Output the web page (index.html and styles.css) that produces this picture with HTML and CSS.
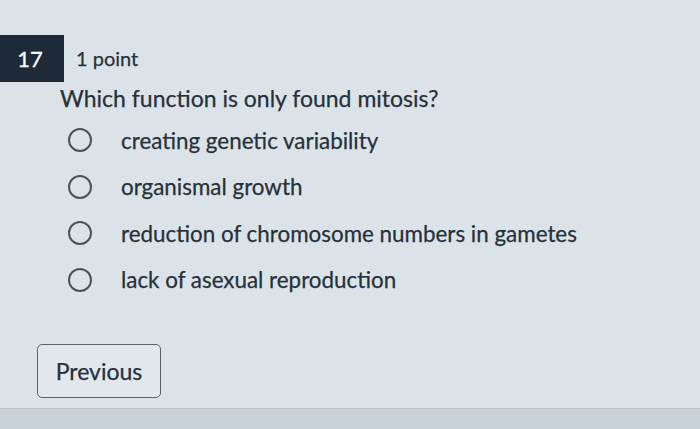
FILE: index.html
```html
<!DOCTYPE html>
<html>
<head>
<meta charset="utf-8">
<link rel="stylesheet" href="styles.css">
</head>
<body>
<div class="page">
  <div class="header">
    <div class="badge">17</div>
    <div class="points">1 point</div>
  </div>
  <div class="question">Which function is only found mitosis?</div>
  <ul class="options">
    <li class="option"><span class="radio"></span><span class="label">creating genetic variability</span></li>
    <li class="option"><span class="radio"></span><span class="label">organismal growth</span></li>
    <li class="option"><span class="radio"></span><span class="label">reduction of chromosome numbers in gametes</span></li>
    <li class="option"><span class="radio"></span><span class="label">lack of asexual reproduction</span></li>
  </ul>
  <div class="nav">
    <button class="btn">Previous</button>
  </div>
</div>
<div class="footer"></div>
</body>
</html>
```
FILE: styles.css
```css
html, body {
  margin: 0;
  padding: 0;
}
body {
  width: 700px;
  height: 429px;
  overflow: hidden;
  background: #dce3e8;
  font-family: Lato, "Open Sans", sans-serif;
  color: #26313a;
  -webkit-text-stroke: 0.25px #26313a;
  display: flex;
  flex-direction: column;
}
.page {
  flex: 1;
  padding-top: 35px;
}
.header {
  display: flex;
  align-items: center;
}
.badge {
  width: 64px;
  height: 47px;
  background: #1e2a37;
  color: #fff;
  -webkit-text-stroke: 0.3px #fff;
  font-size: 22px;
  display: flex;
  align-items: center;
  justify-content: center;
  padding-right: 4px;
  box-sizing: border-box;
}
.points {
  margin-left: 12px;
  font-size: 20px;
  padding-bottom: 2px;
}
.question {
  margin-left: 60px;
  margin-top: 2px;
  font-size: 23px;
}
.options {
  list-style: none;
  margin: 15px 0 0 68px;
  padding: 0;
  display: flex;
  flex-direction: column;
  gap: 20px;
}
.option {
  display: flex;
  align-items: center;
  height: 26.5px;
}
.radio {
  width: 24px;
  height: 24px;
  border: 2px solid #4a535b;
  border-radius: 50%;
  box-sizing: border-box;
  margin-right: 29px;
  flex: none;
}
.label {
  font-size: 22.4px;
}
.nav {
  margin: 51px 0 0 37px;
}
.btn {
  width: 124px;
  height: 54px;
  border: 1.5px solid #59626a;
  border-radius: 5px;
  background: #e1e7ec;
  font-family: Lato, "Open Sans", sans-serif;
  font-size: 23px;
  color: #26313a;
  -webkit-text-stroke: 0.25px #26313a;
  padding: 0;
}
.footer {
  height: 20px;
  background: #c8d1d8;
  border-top: 1px solid #b9c3ca;
}
```
